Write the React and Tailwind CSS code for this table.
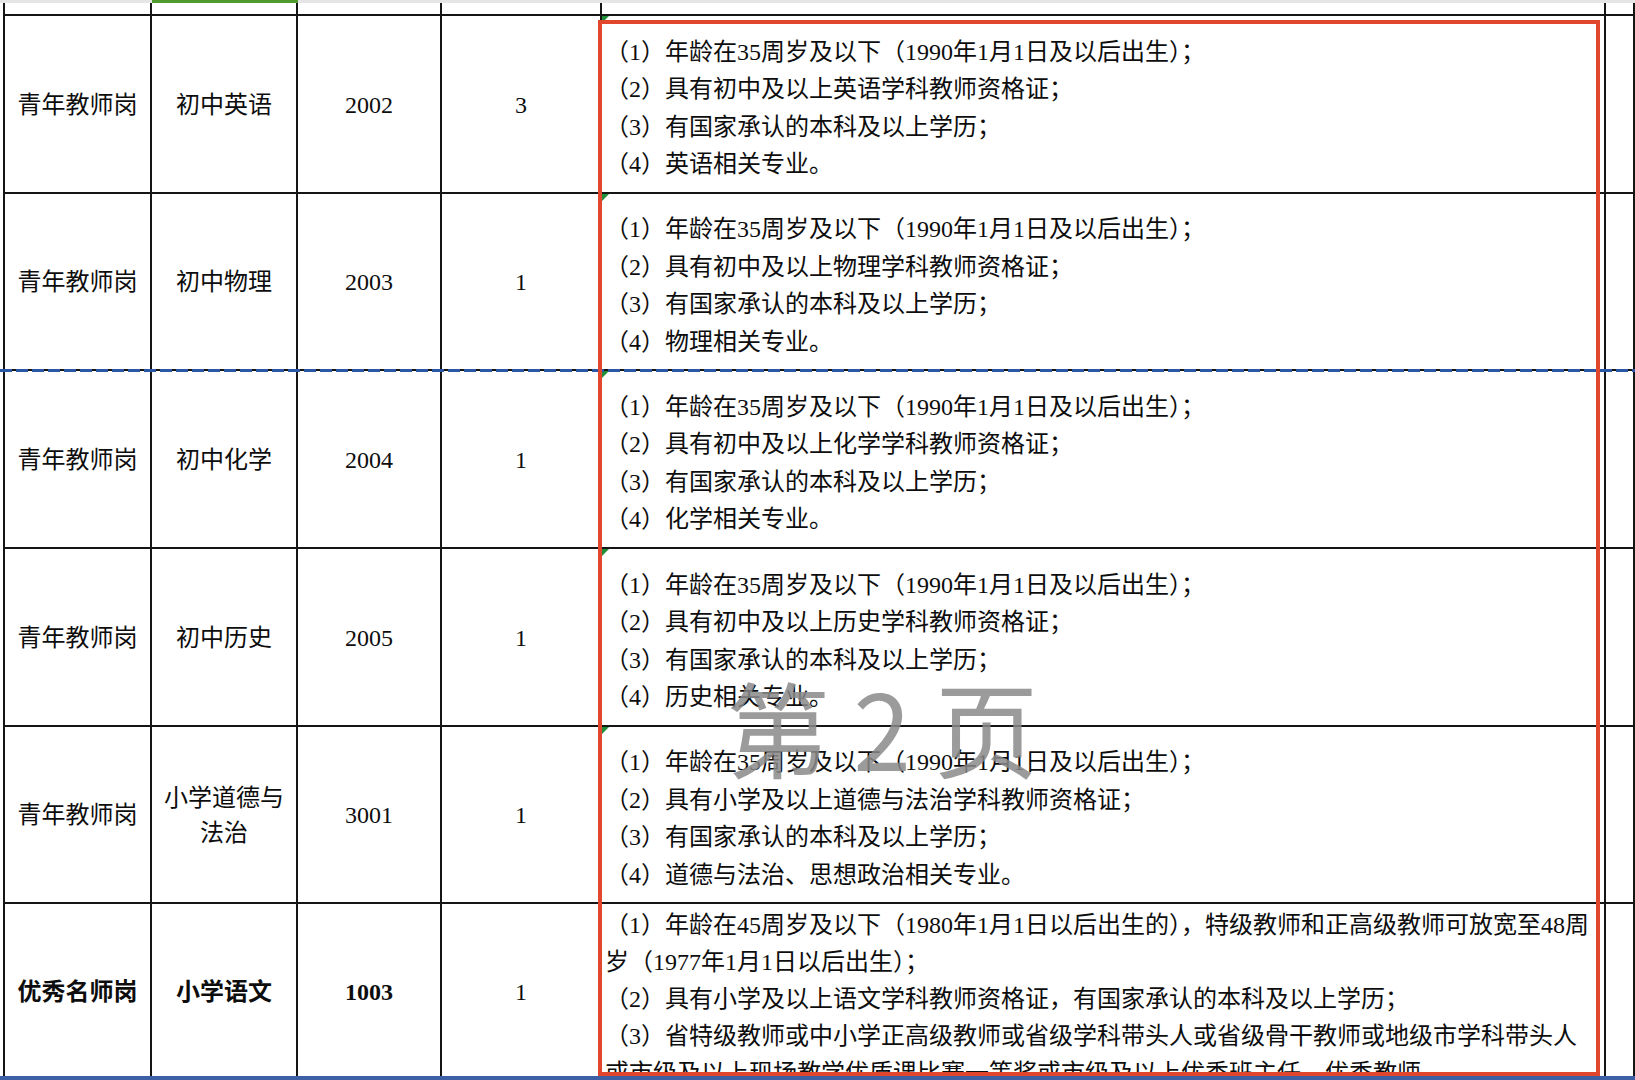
const rows = [
  {
    h: 'h-[178px]',
    post: '青年教师岗',
    subject: '初中英语',
    code: '2002',
    count: '3',
    lines: [
      '（1）年龄在35周岁及以下（1990年1月1日及以后出生）；',
      '（2）具有初中及以上英语学科教师资格证；',
      '（3）有国家承认的本科及以上学历；',
      '（4）英语相关专业。',
    ],
  },
  {
    h: 'h-[177px]',
    post: '青年教师岗',
    subject: '初中物理',
    code: '2003',
    count: '1',
    lines: [
      '（1）年龄在35周岁及以下（1990年1月1日及以后出生）；',
      '（2）具有初中及以上物理学科教师资格证；',
      '（3）有国家承认的本科及以上学历；',
      '（4）物理相关专业。',
    ],
  },
  {
    h: 'h-[178px]',
    post: '青年教师岗',
    subject: '初中化学',
    code: '2004',
    count: '1',
    lines: [
      '（1）年龄在35周岁及以下（1990年1月1日及以后出生）；',
      '（2）具有初中及以上化学学科教师资格证；',
      '（3）有国家承认的本科及以上学历；',
      '（4）化学相关专业。',
    ],
  },
  {
    h: 'h-[178px]',
    post: '青年教师岗',
    subject: '初中历史',
    code: '2005',
    count: '1',
    lines: [
      '（1）年龄在35周岁及以下（1990年1月1日及以后出生）；',
      '（2）具有初中及以上历史学科教师资格证；',
      '（3）有国家承认的本科及以上学历；',
      '（4）历史相关专业。',
    ],
  },
  {
    h: 'h-[177px]',
    post: '青年教师岗',
    subject: '小学道德与法治',
    code: '3001',
    count: '1',
    lines: [
      '（1）年龄在35周岁及以下（1990年1月1日及以后出生）；',
      '（2）具有小学及以上道德与法治学科教师资格证；',
      '（3）有国家承认的本科及以上学历；',
      '（4）道德与法治、思想政治相关专业。',
    ],
  },
];

const lastRow = {
  post: '优秀名师岗',
  subject: '小学语文',
  code: '1003',
  count: '1',
  lines: [
    '（1）年龄在45周岁及以下（1980年1月1日以后出生的），特级教师和正高级教师可放宽至48周',
    '岁（1977年1月1日以后出生）；',
    '（2）具有小学及以上语文学科教师资格证，有国家承认的本科及以上学历；',
    '（3）省特级教师或中小学正高级教师或省级学科带头人或省级骨干教师或地级市学科带头人',
    '或市级及以上现场教学优质课比赛一等奖或市级及以上优秀班主任、优秀教师。',
  ],
};

const cell = 'border-r-2 border-b-2 border-[#151515]';
const center = `${cell} flex items-center justify-center text-center px-2 pt-[2px] leading-[35px]`;

function Marker() {
  return (
    <span className="absolute left-0 top-0 w-0 h-0 border-t-[7px] border-t-[#1f8f3a] border-r-[7px] border-r-transparent" />
  );
}

function Row({ r }) {
  return (
    <>
      <div className={`${center} ${r.h} border-l-2`}>{r.post}</div>
      <div className={`${center} ${r.h}`}>{r.subject}</div>
      <div className={`${center} ${r.h}`}>{r.code}</div>
      <div className={`${center} ${r.h}`}>{r.count}</div>
      <div className={`${cell} ${r.h} relative flex flex-col justify-center pl-[3px] pt-[9px] leading-[37.5px]`}>
        <Marker />
        {r.lines.map((l, i) => (
          <div key={i} className="whitespace-nowrap">{l}</div>
        ))}
      </div>
      <div className={`${cell} ${r.h}`} />
    </>
  );
}

export default function App() {
  return (
    <div className="relative w-[1635px] h-[1080px] overflow-hidden bg-white text-[#0d0d0d] text-[24px] font-['Liberation_Serif','Noto_Sans_CJK_SC',serif]">
      {/* column header edge */}
      <div className="flex h-[3px] bg-[#e5e5e5]">
        <div className="ml-[152px] w-[146px] bg-[#4f9a2f]" />
      </div>

      <div className="ml-[3px] grid grid-cols-[149px_146px_144px_160px_1004px_1fr]">
        <div className={`${cell} h-[13px] border-l-2`} />
        <div className={`${cell} h-[13px]`} />
        <div className={`${cell} h-[13px]`} />
        <div className={`${cell} h-[13px]`} />
        <div className={`${cell} h-[13px]`} />
        <div className={`${cell} h-[13px]`} />

        {rows.map((r, i) => (
          <Row key={i} r={r} />
        ))}

        <div className={`${center} h-[177px] border-l-2 font-bold`}>{lastRow.post}</div>
        <div className={`${center} h-[177px] font-bold`}>{lastRow.subject}</div>
        <div className={`${center} h-[177px] font-bold`}>{lastRow.code}</div>
        <div className={`${center} h-[177px]`}>{lastRow.count}</div>
        <div className={`${cell} h-[177px] relative pl-[3px] pt-[3px] leading-[37px]`}>
          {lastRow.lines.map((l, i) => (
            <div key={i} className="whitespace-nowrap">{l}</div>
          ))}
        </div>
        <div className={`${cell} h-[177px]`} />
      </div>

      {/* page break */}
      <div className="absolute left-0 right-0 top-[369px] h-[3px] bg-[repeating-linear-gradient(90deg,#2b57a4_0px,#2b57a4_12px,transparent_12px,transparent_16px)]" />

      {/* highlight box */}
      <div className="absolute left-[598px] top-[20px] w-[1002px] h-[1056px] border-4 border-[#e1472d] pointer-events-none" />

      {/* watermark */}
      <div className="absolute left-[726px] top-[674px] text-[104px] leading-none whitespace-pre text-[#8a8a8a]/85 font-['Noto_Sans_CJK_SC',sans-serif] pointer-events-none">
        第 2 页
      </div>

      <div className="absolute left-0 right-0 top-[1076px] h-[4px] bg-[#3c5fa5]" />
    </div>
  );
}
